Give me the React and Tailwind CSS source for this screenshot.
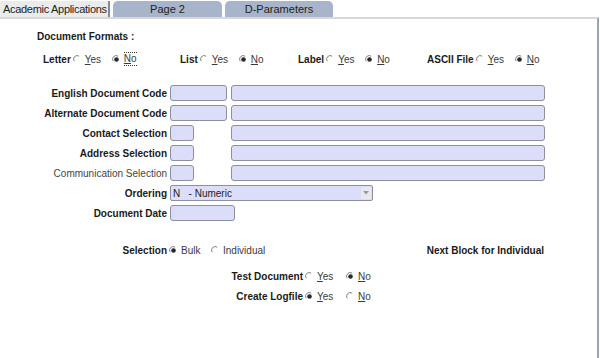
import React from "react";

function Radio({ checked }) {
  return (
    <svg width="9" height="9" viewBox="0 0 9 9" className="shrink-0">
      <path d="M1.2 6.2 A3.6 3.6 0 0 1 6.2 1.2" stroke="#808080" strokeWidth="1" fill="none" />
      {checked && <circle cx="4.5" cy="4.5" r="2.3" fill="#2a2a2a" />}
    </svg>
  );
}

function Opt({ checked, first, rest, w, focus }) {
  return (
    <div className={`flex items-center gap-[3px] ${w}`}>
      <Radio checked={checked} />
      <span className={`text-[#3a3a3a] ${focus ? "border-y border-dotted border-[#333] leading-[12px]" : ""}`}>
        <span className="underline underline-offset-1">{first}</span>
        {rest}
      </span>
    </div>
  );
}

function YesNo({ label, yes, w }) {
  return (
    <div className={`flex items-center ${w}`}>
      <span className="font-bold text-[#1a1a1a] mr-[2px]">{label}</span>
      <Opt checked={yes} first="Y" rest="es" w="w-[39px]" />
      <Opt checked={!yes} first="N" rest="o" focus={label === "Letter"} />
    </div>
  );
}

function Field({ w }) {
  return <div className={`h-[16px] ${w} rounded-[3px] border border-[#8c909c] bg-[#dcdef9]`} />;
}

function Row({ label, bold = true, short, wide = true }) {
  return (
    <div className="flex items-center h-[16px]">
      <div className={`w-[170px] text-right pr-[3px] ${bold ? "font-bold text-[#1a1a1a]" : "text-[#444]"}`}>{label}</div>
      <Field w={short ? "w-[24px]" : "w-[57px]"} />
      {wide && <div className={short ? "ml-[37px]" : "ml-[4px]"}><Field w="w-[314px]" /></div>}
    </div>
  );
}

export default function App() {
  return (
    <div className="w-[600px] h-[358px] bg-white overflow-hidden flex flex-col text-[10px] font-['Liberation_Sans',Arial,sans-serif]">
      <div className="flex items-end h-[17px] pt-[1px]">
        <div className="w-[110px] h-[16px] bg-[#ebebeb] border-r-2 border-[#8a8a8a] pl-[3px] flex items-center text-[#222] whitespace-nowrap text-[11px] tracking-[-0.3px]">
          Academic Applications
        </div>
        <div className="ml-[3px] w-[109px] h-[16px] bg-[#a8b4ca] rounded-t-[5px] flex items-center justify-center text-[#222] text-[11px]">
          Page 2
        </div>
        <div className="ml-[3px] w-[108px] h-[16px] bg-[#a8b4ca] rounded-t-[5px] flex items-center justify-center text-[#222] text-[11px]">
          D-Parameters
        </div>
      </div>
      <div className="flex-1 w-[599px] border-t-2 border-[#d8d8d8] border-r-2 border-r-[#98a2ba] flex flex-col">
        <div className="ml-[37px] mt-[11px] font-bold text-[#1a1a1a] leading-[13px]">Document Formats :</div>
        <div className="flex ml-[43px] mt-[9px] h-[14px]">
          <YesNo label="Letter" yes={false} w="w-[137px]" />
          <YesNo label="List" yes={false} w="w-[118px]" />
          <YesNo label="Label" yes={false} w="w-[129px]" />
          <YesNo label="ASCII File" yes={false} />
        </div>
        <div className="flex flex-col gap-[4px] mt-[19px]">
          <Row label="English Document Code" />
          <Row label="Alternate Document Code" />
          <Row label="Contact Selection" short />
          <Row label="Address Selection" short />
          <Row label="Communication Selection" bold={false} short />
          <div className="flex items-center h-[16px]">
            <div className="w-[170px] text-right pr-[3px] font-bold text-[#1a1a1a]">Ordering</div>
            <div className="w-[203px] h-[16px] rounded-[2px] border border-[#8c909c] bg-[#dcdef9] flex items-center">
              <span className="pl-[2px] flex-1 text-[#222] whitespace-pre">N   - Numeric</span>
              <div className="w-[10px] h-[12px] mr-[1px] bg-[#e8e8ee] flex items-center justify-center">
                <svg width="6" height="4" viewBox="0 0 6 4"><path d="M0 0 H6 L3 3.5 Z" fill="#999" /></svg>
              </div>
            </div>
          </div>
          <div className="flex items-center h-[16px]">
            <div className="w-[170px] text-right pr-[3px] font-bold text-[#1a1a1a]">Document Date</div>
            <Field w="w-[65px]" />
          </div>
        </div>
        <div className="flex items-center mt-[22px] h-[14px]">
          <div className="w-[169px] text-right pr-[2px] font-bold text-[#1a1a1a]">Selection</div>
          <Opt checked first="" rest="Bulk" w="w-[42px]" />
          <Opt checked={false} first="" rest="Individual" />
          <div className="ml-auto mr-[53px] font-bold text-[#1a1a1a]">Next Block for Individual</div>
        </div>
        <div className="flex flex-col gap-[6px] mt-[12px]">
          <div className="flex items-center h-[14px]">
            <div className="w-[305px] text-right pr-[2px] font-bold text-[#1a1a1a]">Test Document</div>
            <Opt checked={false} first="Y" rest="es" w="w-[41px]" />
            <Opt checked first="N" rest="o" />
          </div>
          <div className="flex items-center h-[14px]">
            <div className="w-[305px] text-right pr-[2px] font-bold text-[#1a1a1a]">Create Logfile</div>
            <Opt checked first="Y" rest="es" w="w-[41px]" />
            <Opt checked={false} first="N" rest="o" />
          </div>
        </div>
      </div>
    </div>
  );
}
